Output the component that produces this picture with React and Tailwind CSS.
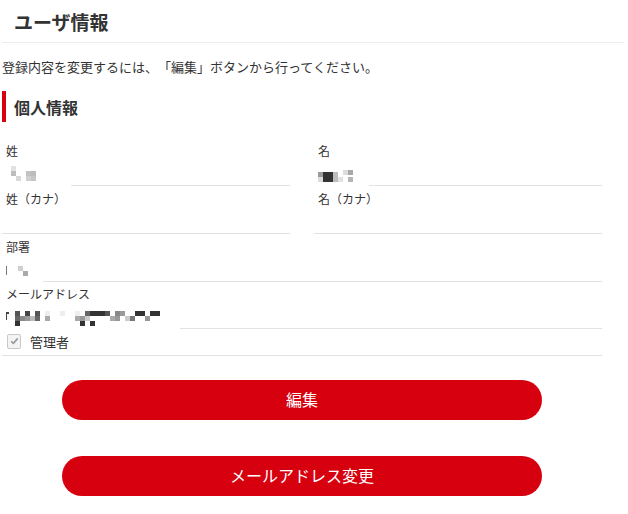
import React from 'react';

// pixelated (censored) values: [x, y, w, h, color], 5px cells
const mosaics = {
  sei: [
    [9, 5, 5, 5, '#e2e2e2'], [9, 10, 5, 5, '#bdbdbd'], [14, 15, 5, 5, '#d9d9d9'],
    [24, 10, 5, 5, '#c2c2c2'], [29, 10, 5, 5, '#bcbcbc'], [24, 15, 5, 5, '#d0d0d0'], [29, 15, 5, 5, '#c6c6c6'],
  ],
  mei: [
    [4, 11, 5, 5, '#9a9a9a'], [4, 16, 5, 5, '#dcdcdc'], [9, 11, 10, 10, '#333333'], [19, 11, 5, 10, '#bdbdbd'],
    [24, 16, 5, 5, '#e2e2e2'], [29, 9, 5, 5, '#dddddd'], [34, 9, 5, 5, '#a9a9a9'], [34, 16, 5, 5, '#b5b5b5'],
  ],
  busho: [
    [4, 9, 1, 9, '#777777'], [16, 9, 5, 5, '#cfcfcf'], [21, 14, 5, 5, '#a9a9a9'],
  ],
  mail: [
    [4, 8, 1, 8, '#444444'], [5, 8, 2, 2, '#444444'],
    [13, 7, 5, 5, '#555555'], [23, 7, 5, 5, '#444444'], [33, 7, 5, 5, '#555555'], [43, 7, 5, 5, '#eeeeee'],
    [58, 7, 5, 5, '#eeeeee'], [73, 7, 5, 5, '#eeeeee'], [83, 7, 5, 5, '#666666'], [88, 7, 15, 5, '#333333'],
    [103, 7, 5, 5, '#555555'], [113, 7, 5, 5, '#888888'], [118, 7, 5, 5, '#999999'], [133, 7, 10, 5, '#333333'],
    [148, 7, 10, 5, '#333333'],
    [13, 12, 5, 5, '#666666'], [18, 12, 5, 5, '#888888'], [23, 12, 5, 5, '#999999'], [28, 12, 5, 5, '#bbbbbb'],
    [33, 12, 5, 5, '#666666'], [43, 12, 5, 5, '#aaaaaa'], [73, 12, 5, 5, '#aaaaaa'], [78, 12, 5, 5, '#999999'],
    [83, 12, 5, 5, '#cccccc'], [108, 12, 5, 5, '#aaaaaa'], [113, 12, 5, 5, '#999999'], [123, 12, 5, 5, '#cccccc'],
    [128, 12, 5, 5, '#777777'], [143, 12, 5, 5, '#999999'],
    [13, 17, 5, 5, '#333333'], [78, 17, 5, 5, '#333333'], [88, 17, 5, 5, '#333333'],
  ],
};

const Mosaic = ({ cells }) => (
  <svg width="170" height="24" className="block" shapeRendering="crispEdges">
    {cells.map(([x, y, w, h, c], i) => (
      <rect key={i} x={x} y={y} width={w} height={h} fill={c} />
    ))}
  </svg>
);

const Field = ({ label, cells, height, gap }) => (
  <div className={`flex flex-col ${height}`}>
    <div className="pt-[3px] px-1 text-[12px] leading-[20px] h-[23px]">{label}</div>
    <div className="h-[24px]">{cells && <Mosaic cells={cells} />}</div>
    <div className={`border-b border-[#e3e3e3] ${gap}`}></div>
  </div>
);

const App = () => {
  return (
    <div
      className="w-[628px] h-[514px] bg-white text-[#333] pl-[2px] pr-[4px]"
      style={{ fontFamily: '"Noto Sans CJK JP", "Noto Sans", sans-serif' }}
    >
      <div className="h-[43px] flex items-center pl-3 border-b border-[#ececec]">
        <h1 className="text-[19px] font-bold leading-none">ユーザ情報</h1>
      </div>

      <div className="w-[600px]">
        <p className="mt-[14px] text-[13px] leading-[20px] [text-spacing-trim:space-all]">登録内容を変更するには、「編集」ボタンから行ってください。</p>

        <div className="mt-[14px] h-[31px] flex items-center border-l-4 border-[#d7000f] pl-2">
          <h2 className="text-[16px] font-bold leading-none">個人情報</h2>
        </div>

        <div className="mt-[16px] grid grid-cols-2 gap-x-6">
          <Field label="姓" cells={mosaics.sei} height="h-[48px]" gap="ml-[69px]" />
          <Field label="名" cells={mosaics.mei} height="h-[48px]" gap="ml-[55px]" />
          <Field label="姓（カナ）" height="h-[48px]" gap="" />
          <Field label="名（カナ）" height="h-[48px]" gap="" />
        </div>

        <Field label="部署" cells={mosaics.busho} height="h-[47px]" gap="ml-[41px]" />
        <Field label="メールアドレス" cells={mosaics.mail} height="h-[46px]" gap="ml-[178px]" />

        <div className="h-[29px] flex items-center border-b border-[#e3e3e3]">
          <span className="ml-[5px] w-[14px] h-[15px] rounded-[2px] border border-[#c8c8c8] bg-[#f4f4f4] flex items-center justify-center">
            <svg width="9" height="8" viewBox="0 0 9 8">
              <path d="M1.2 4.4 L3.4 6.4 L7.8 1.4" fill="none" stroke="#9a9a9a" strokeWidth="1.6" />
            </svg>
          </span>
          <span className="ml-[9px] text-[13px] leading-none">管理者</span>
        </div>

        <div className="mt-[24px] flex flex-col items-center gap-[36px]">
          <button className="w-[480px] h-[40px] rounded-full bg-[#d7000f] text-white text-[16px] leading-none pb-[3px]">編集</button>
          <button className="w-[480px] h-[40px] rounded-full bg-[#d7000f] text-white text-[16px] leading-none pb-[3px]">メールアドレス変更</button>
        </div>
      </div>
    </div>
  );
};

export default App;
